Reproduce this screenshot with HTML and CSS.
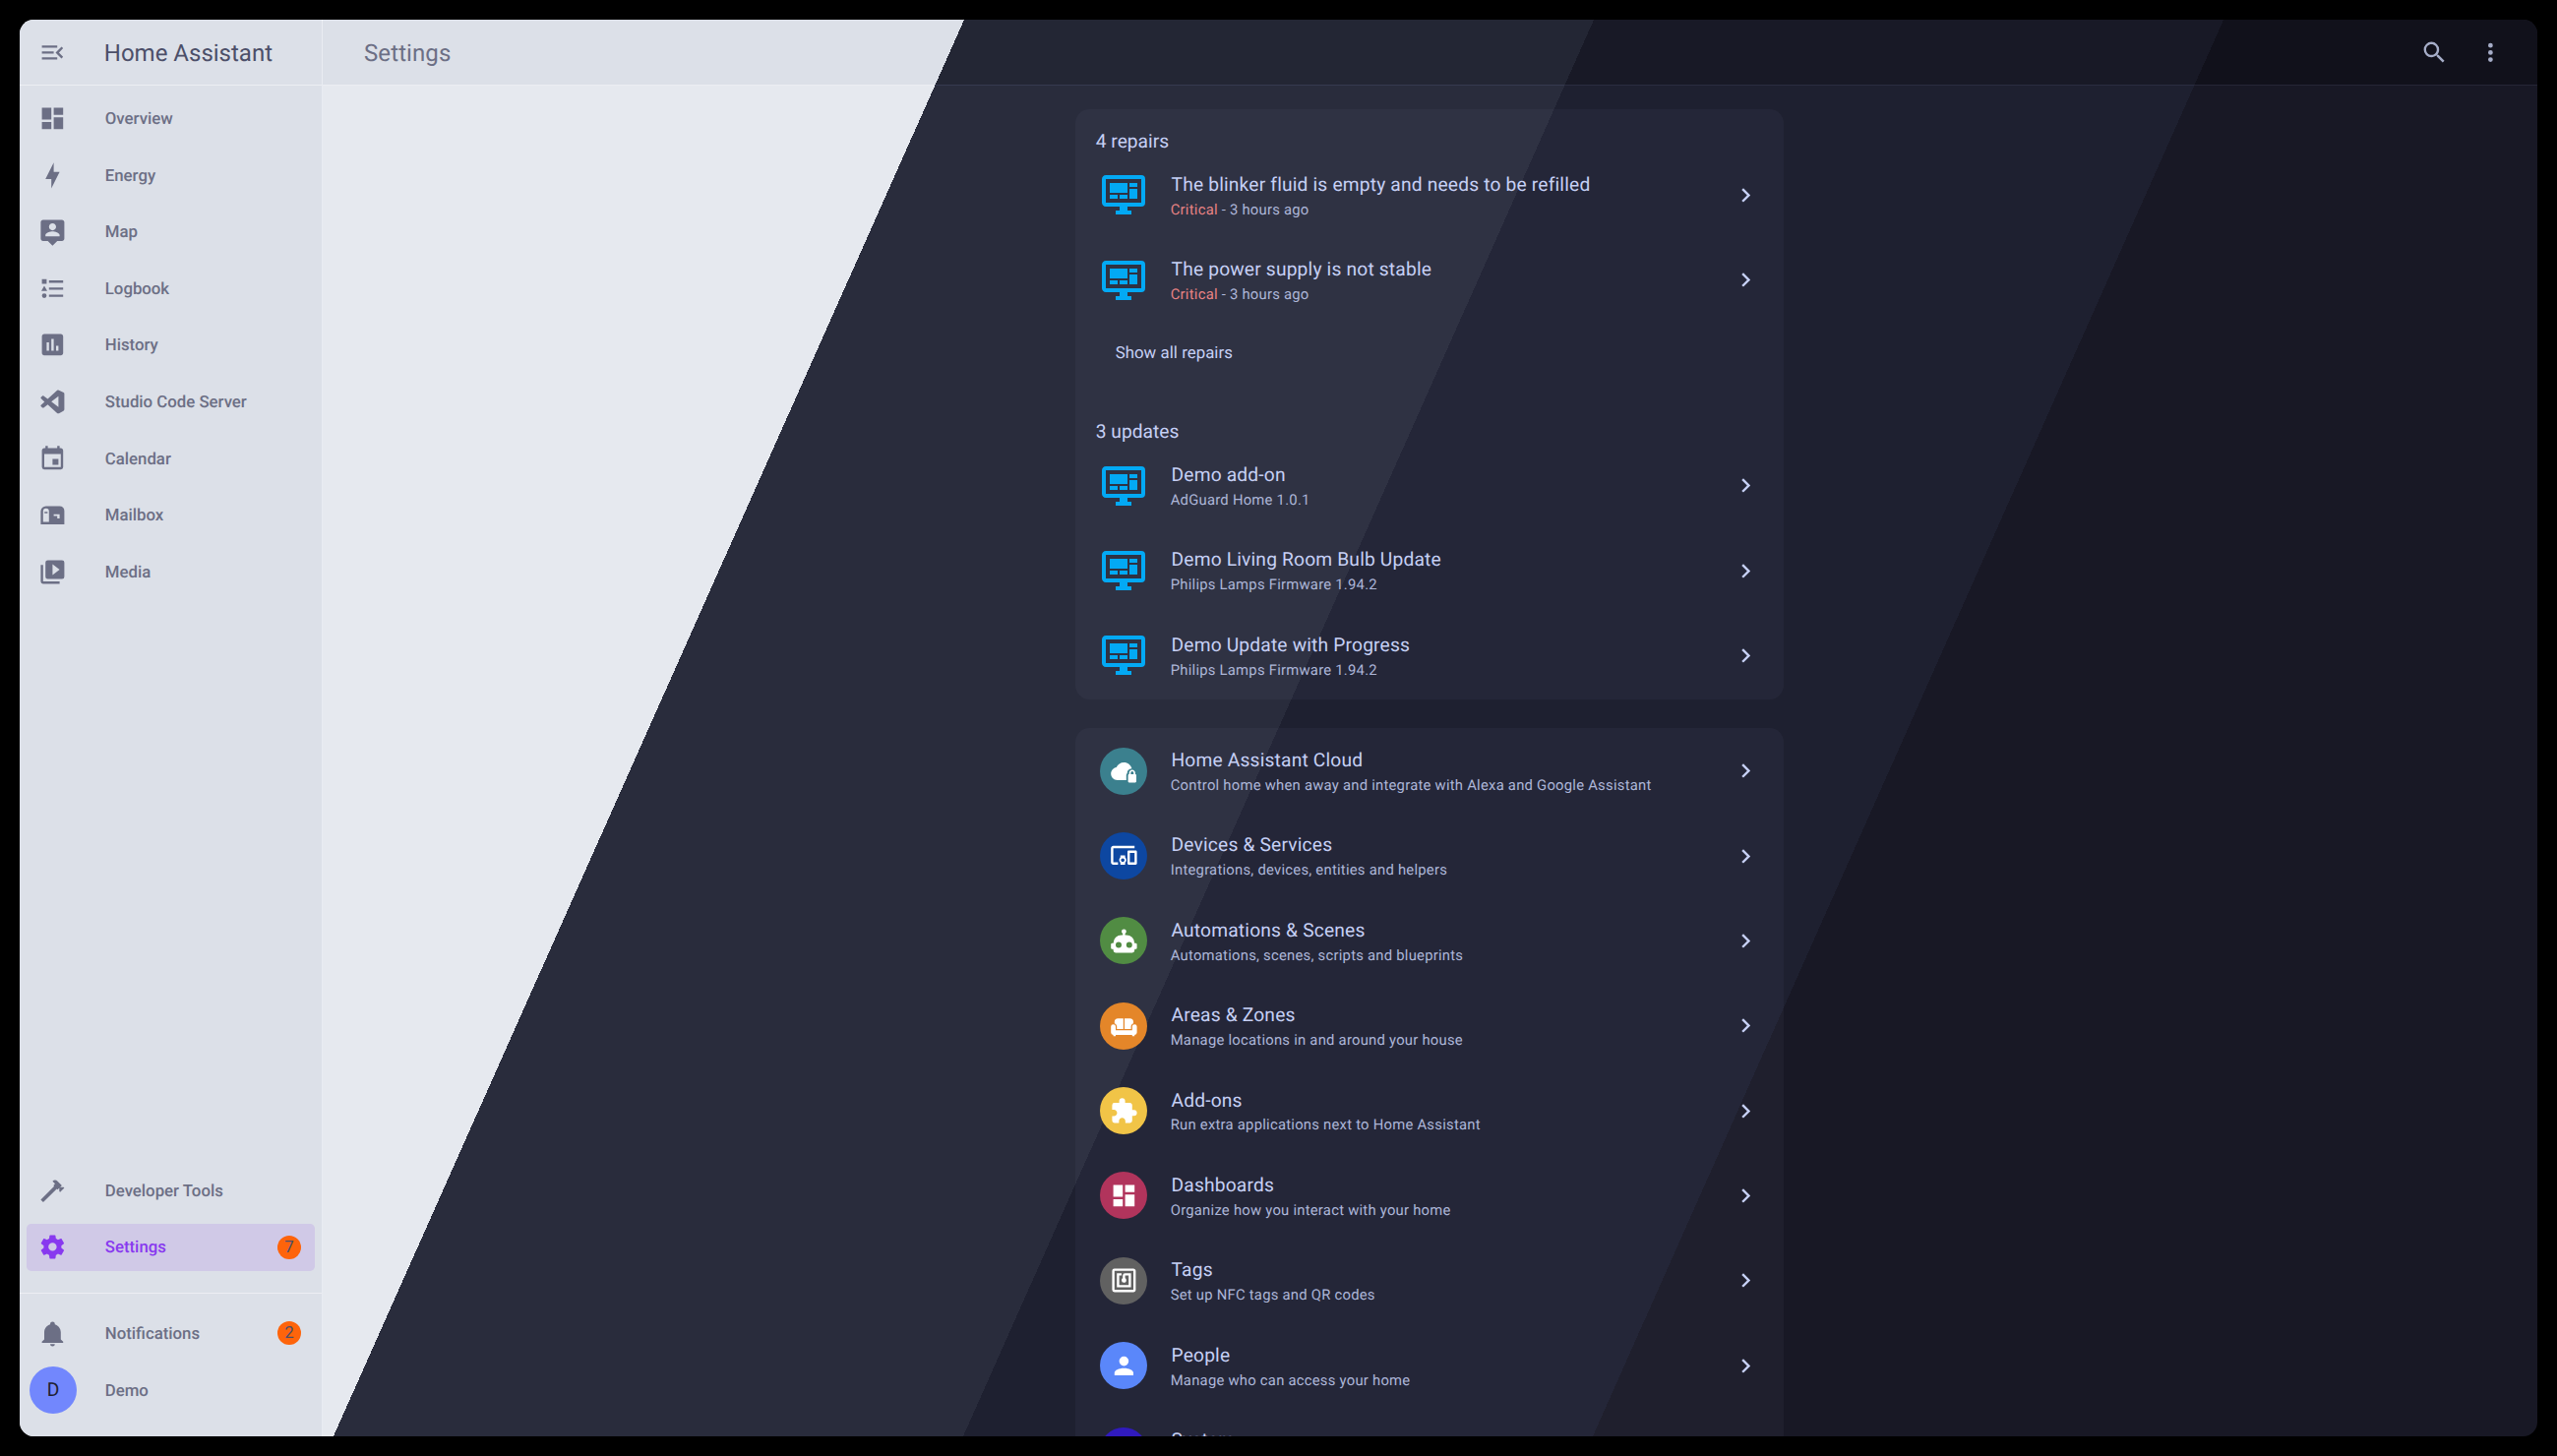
FILE: index.html
```html
<!DOCTYPE html>
<html lang="en">
<head>
<meta charset="utf-8">
<title>Settings – Home Assistant</title>
<link rel="stylesheet" href="styles.css">
</head>
<body>
<svg class="defs" width="0" height="0" aria-hidden="true">
  <symbol id="i-dash" viewBox="0 0 24 24"><path d="M13,3V9H21V3M13,21H21V11H13M3,21H11V15H3M3,13H11V3H3V13Z"/></symbol>
  <symbol id="i-chev" viewBox="0 0 24 24"><path d="M8.59,16.58L13.17,12L8.59,7.41L10,6L16,12L10,18L8.59,16.58Z"/></symbol>
  <symbol id="i-mon" viewBox="0 0 24 24"><path d="M21,16V4H3V16H21M21,2A2,2 0 0,1 23,4V16A2,2 0 0,1 21,18H14V20H16V22H8V20H10V18H3C1.89,18 1,17.1 1,16V4C1,2.89 1.89,2 3,2H21M5,6H14V11H5V6M15,6H19V8H15V6M19,9V14H15V9H19M5,12H9V14H5V12M10,12H14V14H10V12Z"/></symbol>
</svg>
<div class="app">
  <aside class="sidebar">
    <div class="side-head">
      <svg class="ic" viewBox="0 0 24 24"><path d="M21,15.61L19.59,17L14.58,12L19.59,7L21,8.39L17.44,12L21,15.61M3,6H16V8H3V6M3,13V11H13V13H3M3,18V16H16V18H3Z"/></svg>
      <span class="side-title">Home Assistant</span>
    </div>
    <nav class="nav">
      <a class="item"><svg class="ic"><use href="#i-dash"/></svg><span class="label">Overview</span></a>
      <a class="item"><svg class="ic" viewBox="0 0 24 24"><path d="M11 15H6L13 1V9H18L11 23V15Z"/></svg><span class="label">Energy</span></a>
      <a class="item"><svg class="ic" viewBox="0 0 24 24"><path d="M20 2H4C2.9 2 2 2.9 2 4V18C2 19.1 2.9 20 4 20H8L12 24L16 20H20C21.1 20 22 19.1 22 18V4C22 2.9 21.1 2 20 2M12 5C13.66 5 15 6.34 15 8S13.66 11 12 11 9 9.66 9 8 10.34 5 12 5M18 16H6V15C6 13 10 11.9 12 11.9S18 13 18 15V16Z"/></svg><span class="label">Map</span></a>
      <a class="item"><svg class="ic" viewBox="0 0 24 24"><path d="M5,9.5L7.5,14H2.5L5,9.5M3,4H7V8H3V4M5,20A2,2 0 0,0 7,18A2,2 0 0,0 5,16A2,2 0 0,0 3,18A2,2 0 0,0 5,20M9,5V7H21V5H9M9,19H21V17H9V19M9,13H21V11H9V13Z"/></svg><span class="label">Logbook</span></a>
      <a class="item"><svg class="ic" viewBox="0 0 24 24"><path d="M19 3H5C3.9 3 3 3.9 3 5V19C3 20.1 3.9 21 5 21H19C20.1 21 21 20.1 21 19V5C21 3.9 20.1 3 19 3M9 17H7V10H9V17M13 17H11V7H13V17M17 17H15V13H17V17Z"/></svg><span class="label">History</span></a>
      <a class="item"><svg class="ic" viewBox="0 0 24 24"><path fill-rule="evenodd" d="M17,16.47V7.39L11,11.93ZM2.22,9.19C1.92,8.87 2.07,8.32 2.22,8.1L3.42,7C3.62,6.82 4.11,6.74 4.47,7L7.92,9.63L15.92,2.32C16.24,2 16.79,1.88 17.42,2.21L21.42,4.13C21.78,4.34 22,4.72 22,5.13V18.63C22,19.17 21.63,19.59 21.21,19.8L17.42,21.8C17.13,21.94 16.35,22.1 15.92,21.68L7.92,14.37L4.47,17C4.11,17.26 3.62,17.18 3.42,17L2.22,15.9C1.85,15.5 2,15 2.22,14.81L5.22,12Z"/></svg><span class="label">Studio Code Server</span></a>
      <a class="item"><svg class="ic" viewBox="0 0 24 24"><path d="M19,19H5V8H19M16,1V3H8V1H6V3H5C3.89,3 3,3.89 3,5V19A2,2 0 0,0 5,21H19A2,2 0 0,0 21,19V5C21,3.89 20.1,3 19,3H18V1M17,12H12V17H17V12Z"/></svg><span class="label">Calendar</span></a>
      <a class="item"><svg class="ic" viewBox="0 0 24 24"><path fill-rule="evenodd" d="M6.5 4.5H18A4 4 0 0 1 22 8.5V20H2V9A4.5 4.5 0 0 1 6.5 4.5ZM6.5 6.5A2.5 2.5 0 0 0 4 9V18H9V9A2.5 2.5 0 0 0 6.5 6.5ZM5.2 9.3V10.7H7.8V9.3ZM13 11.5V13H16V15H18V11.5Z"/></svg><span class="label">Mailbox</span></a>
      <a class="item"><svg class="ic" viewBox="0 0 24 24"><path d="M4 6H2V20A2 2 0 0 0 4 22H18V20H4V6M20 2H8A2 2 0 0 0 6 4V16A2 2 0 0 0 8 18H20A2 2 0 0 0 22 16V4A2 2 0 0 0 20 2M12 14.5V5.5L18 10L12 14.5Z"/></svg><span class="label">Media</span></a>
    </nav>
    <nav class="nav nav-low">
      <a class="item"><svg class="ic" viewBox="0 0 24 24"><path d="M2 19.63L13.43 8.2L12.72 7.5L14.14 6.07L12 3.89C13.2 2.7 15.09 2.7 16.27 3.89L19.87 7.5L18.45 8.91H21.29L22 9.62L18.45 13.21L17.74 12.5V9.62L16.27 11.04L15.56 10.33L4.13 21.76L2 19.63Z"/></svg><span class="label">Developer Tools</span></a>
      <a class="item active"><svg class="ic" viewBox="0 0 24 24"><path d="M12,15.5A3.5,3.5 0 0,1 8.5,12A3.5,3.5 0 0,1 12,8.5A3.5,3.5 0 0,1 15.5,12A3.5,3.5 0 0,1 12,15.5M19.43,12.97C19.47,12.65 19.5,12.33 19.5,12C19.5,11.67 19.47,11.34 19.43,11L21.54,9.37C21.73,9.22 21.78,8.95 21.66,8.73L19.66,5.27C19.54,5.05 19.27,4.96 19.05,5.05L16.56,6.05C16.04,5.66 15.5,5.32 14.87,5.07L14.5,2.42C14.46,2.18 14.25,2 14,2H10C9.75,2 9.54,2.18 9.5,2.42L9.13,5.07C8.5,5.32 7.96,5.66 7.44,6.05L4.95,5.05C4.73,4.96 4.46,5.05 4.34,5.27L2.34,8.73C2.21,8.95 2.27,9.22 2.46,9.37L4.57,11C4.53,11.34 4.5,11.67 4.5,12C4.5,12.33 4.53,12.65 4.57,12.97L2.46,14.63C2.27,14.78 2.21,15.05 2.34,15.27L4.34,18.73C4.46,18.95 4.73,19.03 4.95,18.95L7.44,17.94C7.96,18.34 8.5,18.68 9.13,18.93L9.5,21.58C9.54,21.82 9.75,22 10,22H14C14.25,22 14.46,21.82 14.5,21.58L14.87,18.93C15.5,18.67 16.04,18.34 16.56,17.94L19.05,18.95C19.27,19.03 19.54,18.95 19.66,18.73L21.66,15.27C21.78,15.05 21.73,14.78 21.54,14.63L19.43,12.97Z"/></svg><span class="label">Settings</span><span class="badge">7</span></a>
    </nav>
    <div class="side-rule"></div>
    <nav class="nav nav-foot">
      <a class="item"><svg class="ic" viewBox="0 0 24 24"><path d="M21,19V20H3V19L5,17V11C5,7.9 7.03,5.17 10,4.29C10,4.19 10,4.1 10,4A2,2 0 0,1 12,2A2,2 0 0,1 14,4C14,4.1 14,4.19 14,4.29C16.97,5.17 19,7.9 19,11V17L21,19M14,21A2,2 0 0,1 12,23A2,2 0 0,1 10,21"/></svg><span class="label">Notifications</span><span class="badge">2</span></a>
      <a class="item"><span class="avatar">D</span><span class="label user">Demo</span></a>
    </nav>
  </aside>
  <main class="main">
    <header class="topbar">
      <h1 class="page-title">Settings</h1>
      <button class="tool"><svg viewBox="0 0 24 24"><path d="M9.5,3A6.5,6.5 0 0,1 16,9.5C16,11.11 15.41,12.59 14.44,13.73L14.71,14H15.5L20.5,19L19,20.5L14,15.5V14.71L13.73,14.44C12.59,15.41 11.11,16 9.5,16A6.5,6.5 0 0,1 3,9.5A6.5,6.5 0 0,1 9.5,3M9.5,5C7,5 5,7 5,9.5C5,12 7,14 9.5,14C12,14 14,12 14,9.5C14,7 12,5 9.5,5Z"/></svg></button>
      <button class="tool"><svg viewBox="0 0 24 24"><path d="M12,16A2,2 0 0,1 14,18A2,2 0 0,1 12,20A2,2 0 0,1 10,18A2,2 0 0,1 12,16M12,10A2,2 0 0,1 14,12A2,2 0 0,1 12,14A2,2 0 0,1 10,12A2,2 0 0,1 12,10M12,4A2,2 0 0,1 14,6A2,2 0 0,1 12,8A2,2 0 0,1 10,6A2,2 0 0,1 12,4Z"/></svg></button>
      <div class="top-line"></div>
    </header>
    <div class="content">
      <section class="card card-first">
        <h2 class="card-head">4 repairs</h2>
        <a class="row"><svg class="mon"><use href="#i-mon"/></svg><div class="txt"><div class="t">The blinker fluid is empty and needs to be refilled</div><div class="s"><span class="crit">Critical</span> - 3 hours ago</div></div><svg class="chev"><use href="#i-chev"/></svg></a>
        <a class="row"><svg class="mon"><use href="#i-mon"/></svg><div class="txt"><div class="t">The power supply is not stable</div><div class="s"><span class="crit">Critical</span> - 3 hours ago</div></div><svg class="chev"><use href="#i-chev"/></svg></a>
        <div class="more"><span class="more-btn">Show all repairs</span></div>
        <h2 class="card-head">3 updates</h2>
        <a class="row"><svg class="mon"><use href="#i-mon"/></svg><div class="txt"><div class="t">Demo add-on</div><div class="s">AdGuard Home 1.0.1</div></div><svg class="chev"><use href="#i-chev"/></svg></a>
        <a class="row"><svg class="mon"><use href="#i-mon"/></svg><div class="txt"><div class="t">Demo Living Room Bulb Update</div><div class="s">Philips Lamps Firmware 1.94.2</div></div><svg class="chev"><use href="#i-chev"/></svg></a>
        <a class="row"><svg class="mon"><use href="#i-mon"/></svg><div class="txt"><div class="t">Demo Update with Progress</div><div class="s">Philips Lamps Firmware 1.94.2</div></div><svg class="chev"><use href="#i-chev"/></svg></a>
      </section>
      <section class="card card-menu">
        <a class="row"><span class="disc c-cloud"><svg viewBox="0 0 24 24"><path d="M6.5 20C3.5 20 1 17.6 1 14.6C1 11.9 3 9.6 5.6 9.2C6.7 6.7 9.1 5 12 5C15.2 5 17.9 7.2 18.7 10.2C17 10.2 15.2 11.3 14.8 13.2V14.2C14.2 14.6 14 15.2 14 16V20H6.5Z"/><path d="M21.6 15V13.9C21.6 12.4 20.4 11.2 19 11.2S16.4 12.4 16.4 13.9V15C15.9 15 15.5 15.4 15.5 16V21C15.5 21.6 15.9 22 16.4 22H21.6C22.1 22 22.5 21.6 22.5 21V16C22.5 15.4 22.1 15 21.6 15M20.2 15H17.8V13.9C17.8 13.2 18.3 12.6 19 12.6S20.2 13.2 20.2 13.9V15Z"/></svg></span><div class="txt"><div class="t">Home Assistant Cloud</div><div class="s">Control home when away and integrate with Alexa and Google Assistant</div></div><svg class="chev"><use href="#i-chev"/></svg></a>
        <a class="row"><span class="disc c-dev"><svg viewBox="0 0 24 24"><path d="M3 6H21V4H3C1.9 4 1 4.9 1 6V18C1 19.1 1.9 20 3 20H7V18H3V6M13 12H9V13.78C8.39 14.33 8 15.11 8 16C8 16.89 8.39 17.67 9 18.22V20H13V18.22C13.61 17.67 14 16.88 14 16S13.61 14.33 13 13.78V12M11 17.5C10.17 17.5 9.5 16.83 9.5 16S10.17 14.5 11 14.5 12.5 15.17 12.5 16 11.83 17.5 11 17.5M22 8H16C15.5 8 15 8.5 15 9V19C15 19.5 15.5 20 16 20H22C22.5 20 23 19.5 23 19V9C23 8.5 22.5 8 22 8M21 18H17V10H21V18Z"/></svg></span><div class="txt"><div class="t">Devices &amp; Services</div><div class="s">Integrations, devices, entities and helpers</div></div><svg class="chev"><use href="#i-chev"/></svg></a>
        <a class="row"><span class="disc c-auto"><svg viewBox="0 0 24 24"><path d="M12,2A2,2 0 0,1 14,4C14,4.74 13.6,5.39 13,5.73V7H14A7,7 0 0,1 21,14H22A1,1 0 0,1 23,15V18A1,1 0 0,1 22,19H21V20A2,2 0 0,1 19,22H5A2,2 0 0,1 3,20V19H2A1,1 0 0,1 1,18V15A1,1 0 0,1 2,14H3A7,7 0 0,1 10,7H11V5.73C10.4,5.39 10,4.74 10,4A2,2 0 0,1 12,2M7.5,13A2.5,2.5 0 0,0 5,15.5A2.5,2.5 0 0,0 7.5,18A2.5,2.5 0 0,0 10,15.5A2.5,2.5 0 0,0 7.5,13M16.5,13A2.5,2.5 0 0,0 14,15.5A2.5,2.5 0 0,0 16.5,18A2.5,2.5 0 0,0 19,15.5A2.5,2.5 0 0,0 16.5,13Z"/></svg></span><div class="txt"><div class="t">Automations &amp; Scenes</div><div class="s">Automations, scenes, scripts and blueprints</div></div><svg class="chev"><use href="#i-chev"/></svg></a>
        <a class="row"><span class="disc c-area"><svg viewBox="0 0 24 24"><path fill-rule="evenodd" d="M7,6H17A3,3 0 0,1 20,9V10.17C18.84,10.58 18,11.69 18,13V15H6V13C6,11.69 5.16,10.58 4,10.17V9A3,3 0 0,1 7,6ZM11.5,6V15H12.5V6ZM1,13A2,2 0 0,1 3,11A2,2 0 0,1 5,13V16H19V13A2,2 0 0,1 21,11A2,2 0 0,1 23,13V18A2,2 0 0,1 21,20V21H19V20H5V21H3V20A2,2 0 0,1 1,18V13Z"/></svg></span><div class="txt"><div class="t">Areas &amp; Zones</div><div class="s">Manage locations in and around your house</div></div><svg class="chev"><use href="#i-chev"/></svg></a>
        <a class="row"><span class="disc c-addon"><svg viewBox="0 0 24 24"><path d="M20.5,11H19V7C19,5.89 18.1,5 17,5H13V3.5A2.5,2.5 0 0,0 10.5,1A2.5,2.5 0 0,0 8,3.5V5H4A2,2 0 0,0 2,7V10.8H3.5C5,10.8 6.2,12 6.2,13.5C6.2,15 5,16.2 3.5,16.2H2V20A2,2 0 0,0 4,22H7.8V20.5C7.8,19 9,17.8 10.5,17.8C12,17.8 13.2,19 13.2,20.5V22H17A2,2 0 0,0 19,20V16H20.5A2.5,2.5 0 0,0 23,13.5A2.5,2.5 0 0,0 20.5,11Z"/></svg></span><div class="txt"><div class="t">Add-ons</div><div class="s">Run extra applications next to Home Assistant</div></div><svg class="chev"><use href="#i-chev"/></svg></a>
        <a class="row"><span class="disc c-dash"><svg><use href="#i-dash"/></svg></span><div class="txt"><div class="t">Dashboards</div><div class="s">Organize how you interact with your home</div></div><svg class="chev"><use href="#i-chev"/></svg></a>
        <a class="row"><span class="disc c-tag"><svg viewBox="0 0 24 24"><path d="M18,6H13A2,2 0 0,0 11,8V10.28C10.4,10.62 10,11.26 10,12A2,2 0 0,0 12,14C13.11,14 14,13.1 14,12C14,11.26 13.6,10.62 13,10.28V8H16V16H8V8H10V6H8L6,6V18H18M20,20H4V4H20M20,2H4A2,2 0 0,0 2,4V20A2,2 0 0,0 4,22H20C21.11,22 22,21.1 22,20V4C22,2.89 21.11,2 20,2Z"/></svg></span><div class="txt"><div class="t">Tags</div><div class="s">Set up NFC tags and QR codes</div></div><svg class="chev"><use href="#i-chev"/></svg></a>
        <a class="row"><span class="disc c-people"><svg viewBox="0 0 24 24"><path d="M12,4A4,4 0 0,1 16,8A4,4 0 0,1 12,12A4,4 0 0,1 8,8A4,4 0 0,1 12,4M12,14C16.42,14 20,15.79 20,18V20H4V18C4,15.79 7.58,14 12,14Z"/></svg></span><div class="txt"><div class="t">People</div><div class="s">Manage who can access your home</div></div><svg class="chev"><use href="#i-chev"/></svg></a>
        <a class="row"><span class="disc c-sys"></span><div class="txt"><div class="t">System</div><div class="s">Create backups, check logs or reboot your system</div></div><svg class="chev"><use href="#i-chev"/></svg></a>
      </section>
    </div>
  </main>
</div>
</body>
</html>
```
FILE: styles.css
```css
* { box-sizing: border-box; }
html, body { height: 100%; }
body {
  margin: 0;
  padding: 20px;
  background: #000;
  font-family: Roboto, "Liberation Sans", sans-serif;
  text-rendering: geometricPrecision;
  overflow: hidden;
}
.defs { position: absolute; }
.app {
  display: flex;
  width: 2559px;
  height: 1440px;
  border-radius: 14.4px;
  overflow: hidden;
  background: linear-gradient(114deg, #e6e9ef 30%, #292c3c 30%, #292c3c 50%, #1e2030 50%, #1e2030 70%, #181825 70%);
}
/* Sidebar */
.sidebar {
  flex: 0 0 308px;
  display: flex;
  flex-direction: column;
  background: #dce0e8;
  border-right: 1px solid #e9ecf2;
  color: #6c6f85;
}
.side-head {
  flex: 0 0 67.2px;
  display: flex;
  align-items: center;
  padding-left: 19px;
  padding-top: 1px;
  border-bottom: 1px solid #eceef3;
  color: #4c4f69;
}
.ic { flex: 0 0 28.8px; width: 28.8px; height: 28.8px; fill: currentColor; }
.side-head .ic { fill: #6c6f85; margin-top: -1px; }
.side-title { margin-left: 38px; font-size: 24px; line-height: 1; letter-spacing: 0; }
.nav { display: flex; flex-direction: column; gap: 9.6px; padding: 9.3px 7px 0; }
.nav-low { margin-top: auto; padding-top: 0; }
.item {
  display: flex;
  align-items: center;
  height: 48px;
  padding-left: 12px;
  padding-right: 14px;
  border-radius: 4.8px;
}
.label { margin-left: 39px; padding-top: 1px; flex: 1; font-size: 16.8px; font-weight: 500; }
.active { background: #d0c9e7; color: #8839ef; }
.badge {
  width: 24px;
  height: 24px;
  border-radius: 50%;
  background: #fe640b;
  color: #4c4f69;
  font-size: 16.8px;
  line-height: 24px;
  text-align: center;
}
.avatar {
  flex: 0 0 48px;
  height: 48px;
  margin-left: -9px;
  border-radius: 50%;
  background: #7287fd;
  color: #1e2030;
  font-size: 19.2px;
  line-height: 48px;
  text-align: center;
}
.user { margin-left: 28.7px; }
.side-rule { height: 1px; margin-top: 22px; background: #eceef3; }
.nav-foot { padding-top: 16.8px; padding-bottom: 23px; }
/* Main */
.main { flex: 1; min-width: 0; display: flex; flex-direction: column; }
.topbar {
  position: relative;
  flex: 0 0 67.2px;
  display: flex;
  align-items: center;
  padding: 0 18.6px 0 42px;
  background: linear-gradient(114deg, #dce0e8 30%, #232634 30%, #232634 50%, #181926 50%, #181926 70%, #11111b 70%) -308px 0 / 2559px 1440px no-repeat;
}
.top-line {
  position: absolute;
  left: 0;
  right: 0;
  bottom: 0;
  height: 1px;
  background: linear-gradient(114deg, #eceef3 30%, #363a4f 30%, #363a4f 50%, #2a2c40 50%, #2a2c40 70%, #262636 70%) -308px -66.2px / 2559px 1440px no-repeat;
}
.page-title { flex: 1; margin: 0; font-size: 24px; font-weight: 400; color: #6c6f85; letter-spacing: 0.1px; }
.tool {
  width: 57.6px;
  height: 57.6px;
  padding: 0;
  display: flex;
  align-items: center;
  justify-content: center;
  border: 0;
  background: none;
}
.tool svg { width: 28.8px; height: 28.8px; fill: #a6adc8; }
.content {
  flex: 1;
  min-height: 0;
  overflow: hidden;
  display: flex;
  flex-direction: column;
  align-items: center;
  gap: 28.8px;
  padding: 24px 1px 0 0;
}
.card {
  flex: none;
  width: 720px;
  border-radius: 14.4px;
  background: rgba(198, 208, 245, 0.04);
  color: #c6d0f5;
}
.card-first { padding-bottom: 1.2px; }
.card-menu { padding-top: 0.8px; }
.card-head {
  margin: 0;
  padding: 20.8px 20.8px 0;
  height: 44px;
  font-size: 19.2px;
  font-weight: 400;
  line-height: 24px;
}
.row { display: flex; align-items: center; height: 86.4px; padding: 0 24px 0 25px; }
.mon { flex: 0 0 48px; width: 48px; height: 48px; fill: #03a9f4; }
.disc {
  flex: 0 0 48px;
  width: 48px;
  height: 48px;
  border-radius: 50%;
  display: flex;
  align-items: center;
  justify-content: center;
}
.disc svg { width: 28.8px; height: 28.8px; fill: #fff; }
.c-cloud { background: #3b808e; }
.c-dev { background: #0d47a1; }
.c-auto { background: #518c43; }
.c-area { background: #e48629; }
.c-addon { background: #f1c447; }
.c-dash { background: #b1345c; }
.c-tag { background: #616161; }
.c-people { background: #5a87fa; }
.c-sys { background: #301abe; }
.txt { flex: 1; min-width: 0; margin-left: 24.5px; padding-top: 2px; }
.t { font-size: 19.2px; line-height: 28.8px; letter-spacing: 0.18px; }
.s { margin: -1px 0 0 -0.8px; font-size: 14.8px; line-height: 23.2px; color: #adb6d8; letter-spacing: 0.25px; }
.crit { color: #e78284; }
.chev { flex: 0 0 28.8px; width: 28.8px; height: 28.8px; fill: #c6d0f5; }
.more { padding: 9.6px 0 25.6px 19.2px; height: 78.4px; }
.more-btn {
  display: flex;
  align-items: center;
  height: 43.2px;
  padding-left: 21.5px;
  font-size: 16.8px;
  letter-spacing: 0.05px;
}
```
